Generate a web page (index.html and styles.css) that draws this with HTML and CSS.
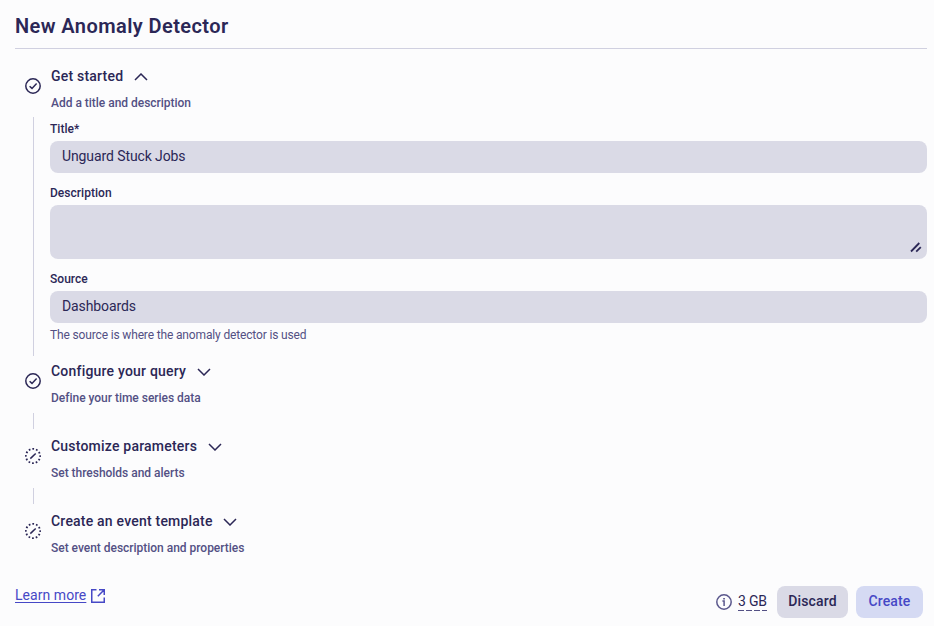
FILE: index.html
```html
<!DOCTYPE html>
<html lang="en">
<head>
<meta charset="utf-8">
<title>New Anomaly Detector</title>
<link rel="stylesheet" href="styles.css">
</head>
<body>
<svg class="defs" aria-hidden="true">
  <symbol id="done" viewBox="0 0 16 16"><circle cx="8" cy="8" r="7.2"/><path d="M4.6 8.3 7 10.4 11.6 5.6"/></symbol>
  <symbol id="pending" viewBox="0 0 16 16"><circle cx="8" cy="8" r="7.1" stroke-width="1.8" stroke-dasharray="1.75 1.967" stroke-dashoffset=".875"/><path d="M5.3 10.6 10.7 5.5"/></symbol>
  <symbol id="down" viewBox="0 0 14 8"><path d="M1 1 7 7 13 1"/></symbol>
  <symbol id="up" viewBox="0 0 14 8"><path d="M1 7 7 1 13 7"/></symbol>
</svg>
<header class="header"><h1 class="title">New Anomaly Detector</h1></header>
<main class="steps">
  <section class="step step-open">
    <div class="head">
      <svg class="status"><use href="#done"/></svg>
      <div class="texts">
        <h2 class="name"><span>Get started</span><svg class="chevron"><use href="#up"/></svg></h2>
        <p class="sub">Add a title and description</p>
      </div>
    </div>
    <div class="body">
      <label class="label">Title*</label>
      <div class="input">Unguard Stuck Jobs</div>
      <label class="label">Description</label>
      <div class="input area"><svg class="grip" viewBox="0 0 12 12"><path d="M1 10.5 9.3 2M6.2 10.7 10.8 6.2"/></svg></div>
      <label class="label">Source</label>
      <div class="input">Dashboards</div>
      <p class="hint">The source is where the anomaly detector is used</p>
    </div>
  </section>
  <section class="step">
    <div class="head">
      <svg class="status"><use href="#done"/></svg>
      <div class="texts">
        <h2 class="name"><span>Configure your query</span><svg class="chevron"><use href="#down"/></svg></h2>
        <p class="sub">Define your time series data</p>
      </div>
    </div>
    <div class="body"></div>
  </section>
  <section class="step">
    <div class="head">
      <svg class="status"><use href="#pending"/></svg>
      <div class="texts">
        <h2 class="name"><span>Customize parameters</span><svg class="chevron"><use href="#down"/></svg></h2>
        <p class="sub">Set thresholds and alerts</p>
      </div>
    </div>
    <div class="body"></div>
  </section>
  <section class="step">
    <div class="head">
      <svg class="status"><use href="#pending"/></svg>
      <div class="texts">
        <h2 class="name"><span>Create an event template</span><svg class="chevron"><use href="#down"/></svg></h2>
        <p class="sub">Set event description and properties</p>
      </div>
    </div>
  </section>
</main>
<footer class="footer">
  <a class="learn"><span class="more">Learn more</span><svg class="ext" viewBox="0 0 14 14"><path d="M5.5.75H.75v12.5h12.5V8.5M8 .75h5.25V6M13 1 6.8 7.2"/></svg></a>
  <div class="actions">
    <svg class="info" viewBox="0 0 16 16"><circle cx="8" cy="8" r="7.2"/><path d="M6.4 7.1H8.1V12M7.2 4.7h1.7"/></svg>
    <span class="size">3 GB</span>
    <button class="btn discard">Discard</button>
    <button class="btn create">Create</button>
  </div>
</footer>
</body>
</html>
```
FILE: styles.css
```css
* { box-sizing: border-box; margin: 0; padding: 0; }
body {
  width: 934px; height: 626px; overflow: hidden;
  background: #fcfcfd; color: #2b2756;
  font-family: Roboto, "Liberation Sans", sans-serif;
  font-size: 14px; line-height: 20px; white-space: nowrap;
  display: flex; flex-direction: column;
}
svg { fill: none; stroke: currentColor; stroke-width: 1.5; flex: none; }
.defs { display: none; }
.header { margin: 0 7px 0 15px; height: 49px; padding-top: 14px; border-bottom: 1px solid #d0d0e0; }
.title { font-size: 20px; line-height: 24px; font-weight: 600; letter-spacing: .42px; }
.steps { padding: 12px 7px 0 25px; }
.step { margin-bottom: 2px; }
.step-open { margin-bottom: 0; }
.head { display: flex; height: 57px; }
.step-open .head { height: 56px; }
.status { width: 16px; height: 16px; margin-top: 17px; }
.texts { margin-left: 10px; padding-top: 5px; }
.name { display: flex; align-items: center; font-size: 14px; font-weight: 500; line-height: 20px; letter-spacing: .21px; }
.chevron { width: 14px; height: 8px; margin: 1px 0 0 10.5px; }
.sub { margin-top: 9px; font-size: 12px; line-height: 16px; font-weight: 500; color: #535084; letter-spacing: -.02px; }
.body { margin-left: 8px; padding-left: 16px; height: 16px; border-left: 1px solid #d0d0e0; }
.step-open .body { height: 239px; padding-top: 4px; }
.label { display: block; font-size: 12px; line-height: 16px; font-weight: 500; margin-bottom: 4px; letter-spacing: .03px; }
.input { display: flex; align-items: center; height: 32px; margin-bottom: 12px; padding: 0 12px 2px; border-radius: 8px; background: #dadae6; letter-spacing: -.1px; }
.area { height: 54px; align-items: flex-end; justify-content: flex-end; padding: 0 5px 6px; }
.grip { width: 12px; height: 12px; stroke-width: 1.8; }
.hint { margin-top: -8px; font-size: 12px; line-height: 16px; color: #535084; letter-spacing: -.15px; }
.footer { display: flex; justify-content: space-between; margin: auto 11px 8px 15px; height: 32px; }
.learn { display: flex; color: #4648c6; height: 20px; margin-top: -1px; }
.more { text-decoration: underline; text-underline-offset: 2px; letter-spacing: .05px; }
.ext { width: 14px; height: 14px; margin: 4px 0 0 5px; }
.actions { display: flex; align-items: center; }
.info { width: 16px; height: 16px; color: #5a578c; margin-right: 6px; }
.size {
  width: 29px; height: 20px; margin: -2px 10px 0 0; letter-spacing: -.2px;
  background: repeating-linear-gradient(90deg, #535084 0 6px, transparent 6px 8px) 0 100% / 100% 1px no-repeat;
}
.btn { height: 32px; border: 0; border-radius: 8px; font: 500 14px/20px Roboto, sans-serif; letter-spacing: .15px; color: #2b2756; padding-bottom: 2px; }
.discard { width: 71px; background: #dadae6; }
.create { width: 67px; margin-left: 8px; background: #d5daf3; color: #4648c6; }
```
